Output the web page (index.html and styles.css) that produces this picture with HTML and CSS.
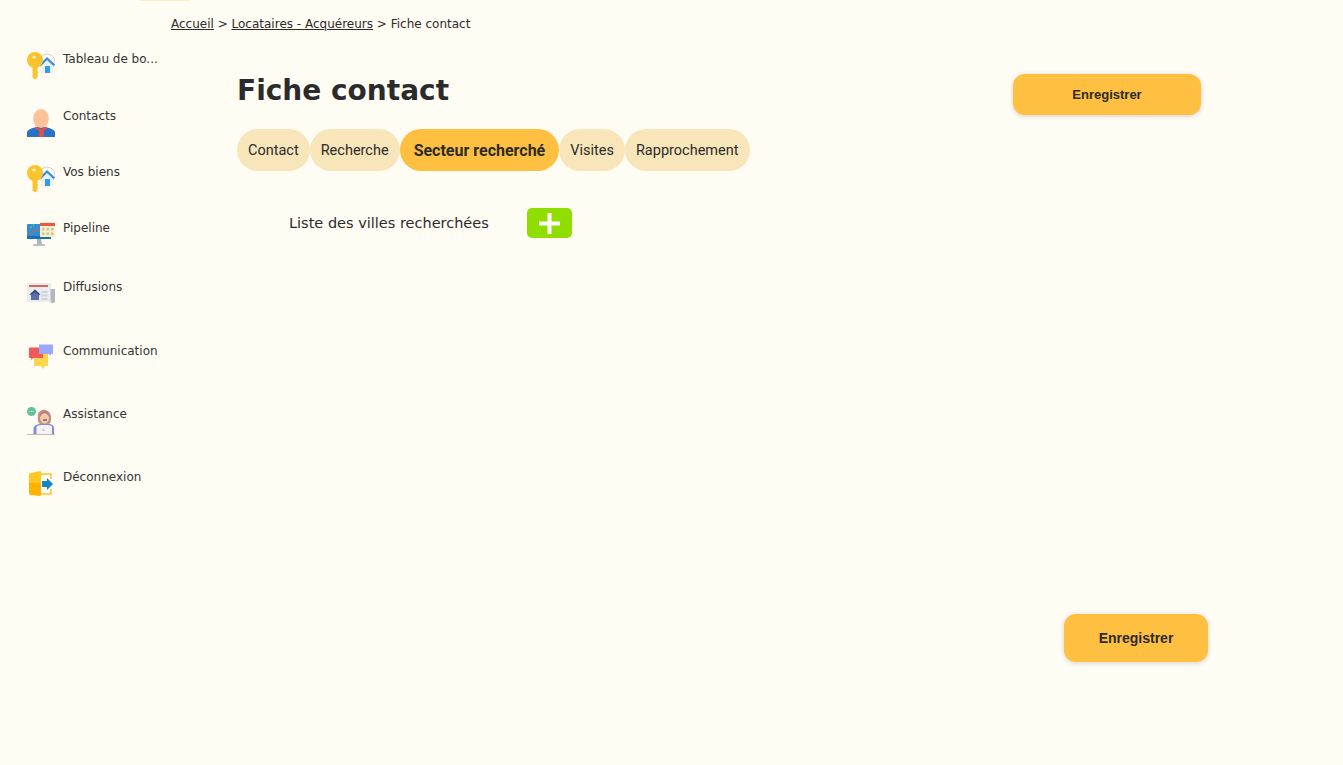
FILE: index.html
```html
<!DOCTYPE html>
<html lang="fr">
<head>
    <meta charset="UTF-8">
    <meta name="viewport" content="width=device-width, initial-scale=1.0">
    <title>Fiche contact</title>
    <link rel="stylesheet" href="styles.css">
</head>
<body>
    <svg class="sprites" width="0" height="0" aria-hidden="true">
        <symbol id="icon-key" viewBox="0 0 28 28">
            <circle cx="20" cy="10" r="8" fill="none" stroke="#d5d5d5" stroke-width="1"/>
            <path d="M13 12 L20 5 L28 12 L26 13 L26 21 L14 21 L14 13 Z" fill="#eef1f2"/>
            <path d="M12.5 12.5 L20 5 L28 12.5 L26.4 14 L20 8 L14 14 Z" fill="#2f8fe8"/>
            <rect x="18" y="14" width="5" height="7" fill="#2f9bf0"/>
            <circle cx="8" cy="8" r="8" fill="#fcc42c"/>
            <circle cx="7" cy="5" r="1.6" fill="#fff3c8"/>
            <path d="M5.5 14 H10.5 V19 L11.5 20 L10.5 21.5 V25.5 L8 27.5 L5.5 25.5 Z" fill="#fcc42c"/>
        </symbol>
    </svg>

    <div class="top-glow"></div>

    <div class="layout">
        <nav class="sidebar">
            <a class="nav-item nav-item-1" href="#">
                <svg class="nav-icon" viewBox="0 0 28 28"><use href="#icon-key"/></svg>
                <span class="nav-label">Tableau de bo...</span>
            </a>
            <a class="nav-item nav-item-2" href="#">
                <svg class="nav-icon" viewBox="0 0 28 28">
                    <path d="M0 28 V23 Q1 20 8 18.500 L14 17 L20 18.500 Q27 20 28 23 V28 Z" fill="#2a72c8"/>
                    <ellipse cx="14" cy="9.500" rx="7.800" ry="9.500" fill="#fdc396"/>
                    <path d="M8.500 17.500 L14 20 L19.500 17.500 L20 19.500 L16.500 22 L17 28 H12 L12.500 22 L8 19.500 Z" fill="#e5503f"/>
                </svg>
                <span class="nav-label">Contacts</span>
            </a>
            <a class="nav-item nav-item-3" href="#">
                <svg class="nav-icon" viewBox="0 0 28 28"><use href="#icon-key"/></svg>
                <span class="nav-label">Vos biens</span>
            </a>
            <a class="nav-item nav-item-4" href="#">
                <svg class="nav-icon" viewBox="0 0 28 28">
                    <rect x="0" y="3" width="24" height="15" rx="1" fill="#2f8fd0"/>
                    <rect x="0" y="15" width="24" height="3" fill="#1c6fae"/>
                    <path d="M2 13 L7 9 L9 11 L13 7" fill="none" stroke="#e5503f" stroke-width="1"/>
                    <path d="M3 7 L7 3.500" fill="none" stroke="#e8d85a" stroke-width="1" stroke-dasharray="1 1"/>
                    <path d="M10 18 H14 L15 23 H10 Z" fill="#a9b7bb"/>
                    <rect x="6" y="23" width="12" height="2" rx="1" fill="#b5c0c3"/>
                    <rect x="13" y="1" width="15" height="15" fill="#f9efc8"/>
                    <rect x="13" y="2" width="15" height="3" fill="#ea5548"/>
                    <g fill="#c9c2a0">
                        <rect x="15" y="7" width="2.500" height="2.500"/>
                        <rect x="19.500" y="7" width="2.500" height="2.500"/>
                        <rect x="24" y="7" width="2.500" height="2.500"/>
                        <rect x="15" y="11.500" width="2.500" height="2.500"/>
                        <rect x="19.500" y="11.500" width="2.500" height="2.500"/>
                        <rect x="24" y="11.500" width="2.500" height="2.500"/>
                    </g>
                </svg>
                <span class="nav-label">Pipeline</span>
            </a>
            <a class="nav-item nav-item-5" href="#">
                <svg class="nav-icon" viewBox="0 0 28 28">
                    <rect x="0" y="3" width="24" height="19" rx="1" fill="#e9edf0"/>
                    <rect x="2" y="5" width="19" height="2" fill="#d9655c"/>
                    <path d="M2.500 15 L8 10 L13.500 15 L12 15 V20 H4 V15 Z" fill="#5b6ea8"/>
                    <path d="M2.500 14.500 L8 9.500 L13.500 14.500 L11.500 14.500 L8 12 L4.500 14.500 Z" fill="#34477c"/>
                    <g fill="#cfd3d6">
                        <rect x="14.500" y="11" width="6" height="2"/>
                        <rect x="14.500" y="14.500" width="6" height="2"/>
                        <rect x="14.500" y="18" width="6" height="2"/>
                    </g>
                    <path d="M23.500 9 H28 V22 L25.500 23.500 L23.500 22 Z" fill="#b3b8bc"/>
                </svg>
                <span class="nav-label">Diffusions</span>
            </a>
            <a class="nav-item nav-item-6" href="#">
                <svg class="nav-icon" viewBox="0 0 28 28">
                    <path d="M7 10 H21 V22 H18 L16 25 L14 22 H7 Z" fill="#fdd650"/>
                    <path d="M2 4.500 Q2 3.500 3 3.500 H15 Q16 3.500 16 4.500 V13 Q16 14 15 14 H6 L4.500 16 L4 14 H3 Q2 14 2 13 Z" fill="#f25a5a"/>
                    <path d="M12 0.500 H26 V10 H24 L23.500 11.500 L21.500 10 H12 Z" fill="#9aa8fb"/>
                </svg>
                <span class="nav-label">Communication</span>
            </a>
            <a class="nav-item nav-item-7" href="#">
                <svg class="nav-icon" viewBox="0 0 28 28">
                    <circle cx="4.500" cy="4.500" r="4.500" fill="#62c09a"/>
                    <path d="M2.500 4.500 H6.500" stroke="#d6efe3" stroke-width="1" stroke-dasharray="1 .5"/>
                    <path d="M11 12 Q9 4 17 2.500 Q25 4 24 12 Q24 16 22 17 H13 Q11 16 11 12 Z" fill="#c48d87"/>
                    <ellipse cx="17.500" cy="11" rx="4.500" ry="5.500" fill="#f4c9b0"/>
                    <path d="M13 10 Q15 6 18 6 Q21 7 22 10 Q22 5 17.500 4.500 Q13 5 13 10 Z" fill="#b77c78"/>
                    <path d="M16 13 H20" stroke="#333" stroke-width="1"/>
                    <path d="M6.500 27 V21 Q7 18 12 17 H23 Q27 18 27 21 V27 Z" fill="#7f8ed8"/>
                    <path d="M9.500 27 V19.500 Q11 18 14 18 H21 Q24 18 25 19.500 V27 Z" fill="#f5f3f2"/>
                    <rect x="15.500" y="22" width="2" height="2" fill="#c8c8cf"/>
                    <rect x="0" y="27" width="28" height="1" fill="#c2bcc0"/>
                </svg>
                <span class="nav-label">Assistance</span>
            </a>
            <a class="nav-item nav-item-8" href="#">
                <svg class="nav-icon" viewBox="0 0 28 28">
                    <path d="M14 4 H24 V9 M24 19 V24 H14" fill="none" stroke="#fcc42c" stroke-width="1.500"/>
                    <path d="M2 3.500 L13 1 Q14 1 14 2 V13 H2 Z" fill="#fdc81f"/>
                    <path d="M2 13 H14 V25 Q14 26 13 26 L4 25 Q2 25 2 23 Z" fill="#ffb300"/>
                    <path d="M15 11 H20 V8 L26 14 L20 20 V17 H15 Z" fill="#0f85d0"/>
                </svg>
                <span class="nav-label">Déconnexion</span>
            </a>
        </nav>

        <main class="main">
            <div class="breadcrumb">
                <a href="#">Accueil</a> &gt; <a href="#">Locataires - Acquéreurs</a> &gt; Fiche contact
            </div>

            <div class="page-head">
                <h1>Fiche contact</h1>
                <button class="button button-top">Enregistrer</button>
            </div>

            <div class="tabs">
                <a class="tab" href="#">Contact</a>
                <a class="tab" href="#">Recherche</a>
                <a class="tab active" href="#">Secteur recherché</a>
                <a class="tab" href="#">Visites</a>
                <a class="tab" href="#">Rapprochement</a>
            </div>

            <div class="cities">
                <span class="cities-label">Liste des villes recherchées</span>
                <button class="add-button" aria-label="Ajouter">
                    <svg width="21" height="21" viewBox="0 0 21 21"><path d="M8.500 0 H12.500 V8.500 H21 V12.500 H12.500 V21 H8.500 V12.500 H0 V8.500 H8.500 Z" fill="#fff"/></svg>
                </button>
            </div>

            <div class="page-foot">
                <button class="button button-bottom">Enregistrer</button>
            </div>
        </main>
    </div>
</body>
</html>
```

FILE: styles.css
```css
:root {
    --background: #fffcf4;
    --text: #2b2b2b;
    --orange: #ffbf40;
    --tab: #f8e6ba;
    --green: #90dd00;
}

* {
    margin: 0;
    padding: 0;
    box-sizing: border-box;
}

html, body {
    height: 100%;
    overflow: hidden;
}

body {
    background: var(--background);
    color: var(--text);
    font-family: "DejaVu Sans", sans-serif;
}

.sprites {
    position: absolute;
}

.top-glow {
    position: absolute;
    top: 0;
    left: 140px;
    width: 50px;
    height: 1px;
    background: #fff0c4;
}

.layout {
    display: flex;
    height: 100%;
}

.sidebar {
    width: 171px;
    flex-shrink: 0;
    padding: 52px 0 0 27px;
    display: flex;
    flex-direction: column;
}

.nav-item {
    display: flex;
    gap: 8px;
    color: #333;
    text-decoration: none;
    font-size: 12px;
}

.nav-item-1 { height: 57px; }
.nav-item-2 { height: 56px; }
.nav-item-3 { height: 56px; }
.nav-item-4 { height: 59px; }
.nav-item-5 { height: 64px; }
.nav-item-6 { height: 63px; }
.nav-item-7 { height: 63px; }

.nav-icon {
    width: 28px;
    height: 28px;
    flex-shrink: 0;
}

.nav-label {
    line-height: 14px;
    white-space: nowrap;
}

.main {
    flex: 1;
    min-width: 0;
}

.breadcrumb {
    padding-top: 17px;
    font-size: 12px;
    line-height: 15px;
    color: var(--text);
}

.breadcrumb a {
    color: var(--text);
}

.page-head {
    display: flex;
    justify-content: space-between;
    align-items: flex-start;
    margin-top: 42px;
    padding: 0 142px 0 66px;
}

h1 {
    font-size: 28px;
    font-weight: 700;
    line-height: 34px;
}

.button {
    background: var(--orange);
    color: var(--text);
    border: none;
    font-family: "Liberation Sans", sans-serif;
    font-weight: 700;
    box-shadow: 0 1px 5px rgba(0, 0, 0, 0.18);
    cursor: pointer;
}

.button-top {
    width: 188px;
    height: 41px;
    border-radius: 12px;
    font-size: 13px;
}

.tabs {
    display: flex;
    margin-top: 14px;
    padding-left: 66px;
}

.tab {
    display: flex;
    align-items: center;
    height: 42px;
    padding: 0 11px;
    border-radius: 21px;
    background: var(--tab);
    color: var(--text);
    font-family: Roboto, sans-serif;
    font-size: 14.500px;
    text-decoration: none;
}

.tab.active {
    padding: 0 14px;
    background: var(--orange);
    font-size: 16px;
    font-weight: 700;
}

.cities {
    display: flex;
    align-items: center;
    gap: 38px;
    margin-top: 37px;
    padding-left: 118px;
}

.cities-label {
    font-size: 14.500px;
}

.add-button {
    display: flex;
    align-items: center;
    justify-content: center;
    width: 45px;
    height: 30px;
    border: none;
    border-radius: 5px;
    background: var(--green);
}

.page-foot {
    display: flex;
    justify-content: flex-end;
    margin-top: 376px;
    padding-right: 135px;
}

.button-bottom {
    width: 144px;
    height: 48px;
    border-radius: 12px;
    font-size: 14px;
}
```
